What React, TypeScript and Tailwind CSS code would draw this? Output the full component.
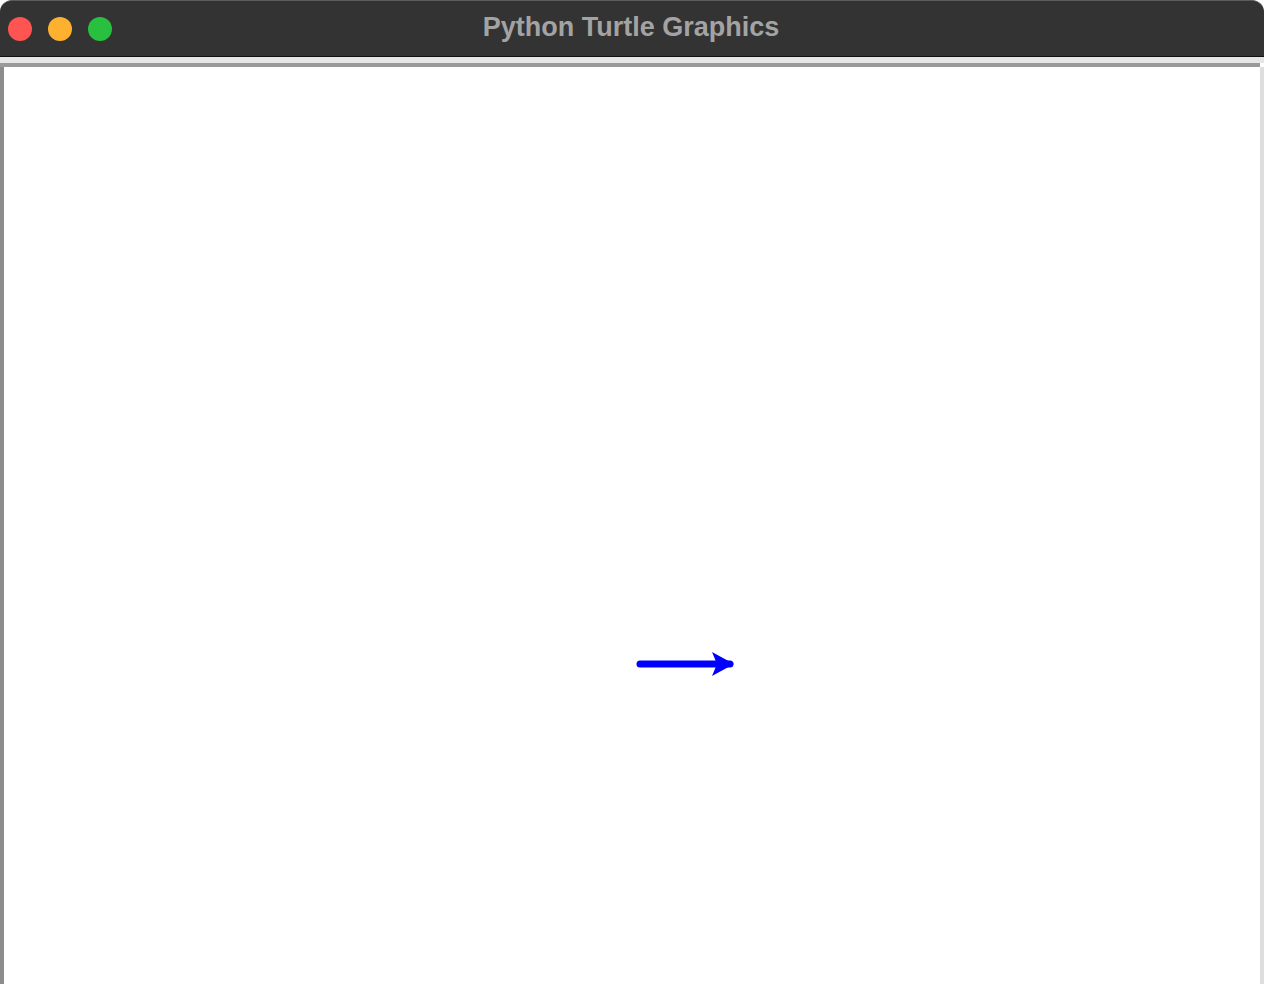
export default function App() {
  return (
    <div className="flex h-screen w-full flex-col overflow-hidden bg-white font-['Liberation_Sans',Arial,sans-serif]">
      <div className="relative flex h-[57px] shrink-0 items-center rounded-t-[12px] border-t border-[#5c5c5c] border-b border-b-[#111] bg-[#333333]">
        <div className="flex items-center gap-[16px] pl-[8px]">
          <span className="h-[24px] w-[24px] rounded-full bg-[#fe5552]" />
          <span className="h-[24px] w-[24px] rounded-full bg-[#fdb12e]" />
          <span className="h-[24px] w-[24px] rounded-full bg-[#29c03f]" />
        </div>
        <div className="pointer-events-none absolute inset-0 flex items-center justify-center pr-[2px] pb-[2px]">
          <span className="text-[27px] font-bold text-[#a3a3a3]">Python Turtle Graphics</span>
        </div>
      </div>
      <div className="h-[6px] shrink-0 bg-[#e6e6e6]" />
      <div className="mr-[4px] h-[4px] shrink-0 bg-[#9a9a9a]" />
      <div className="relative flex-1 border-l-[4px] border-l-[#8c8c8c] border-r-[4px] border-r-[#dedede] bg-white">
        <svg className="absolute left-[626px] top-[579px]" width="110" height="36" viewBox="0 0 110 36">
          <line x1="10" y1="18" x2="100" y2="18" stroke="#0000ff" strokeWidth="7" strokeLinecap="round" />
          <polygon points="104,18 82,6 87,18 82,30" fill="#0000ff" />
        </svg>
      </div>
    </div>
  );
}
